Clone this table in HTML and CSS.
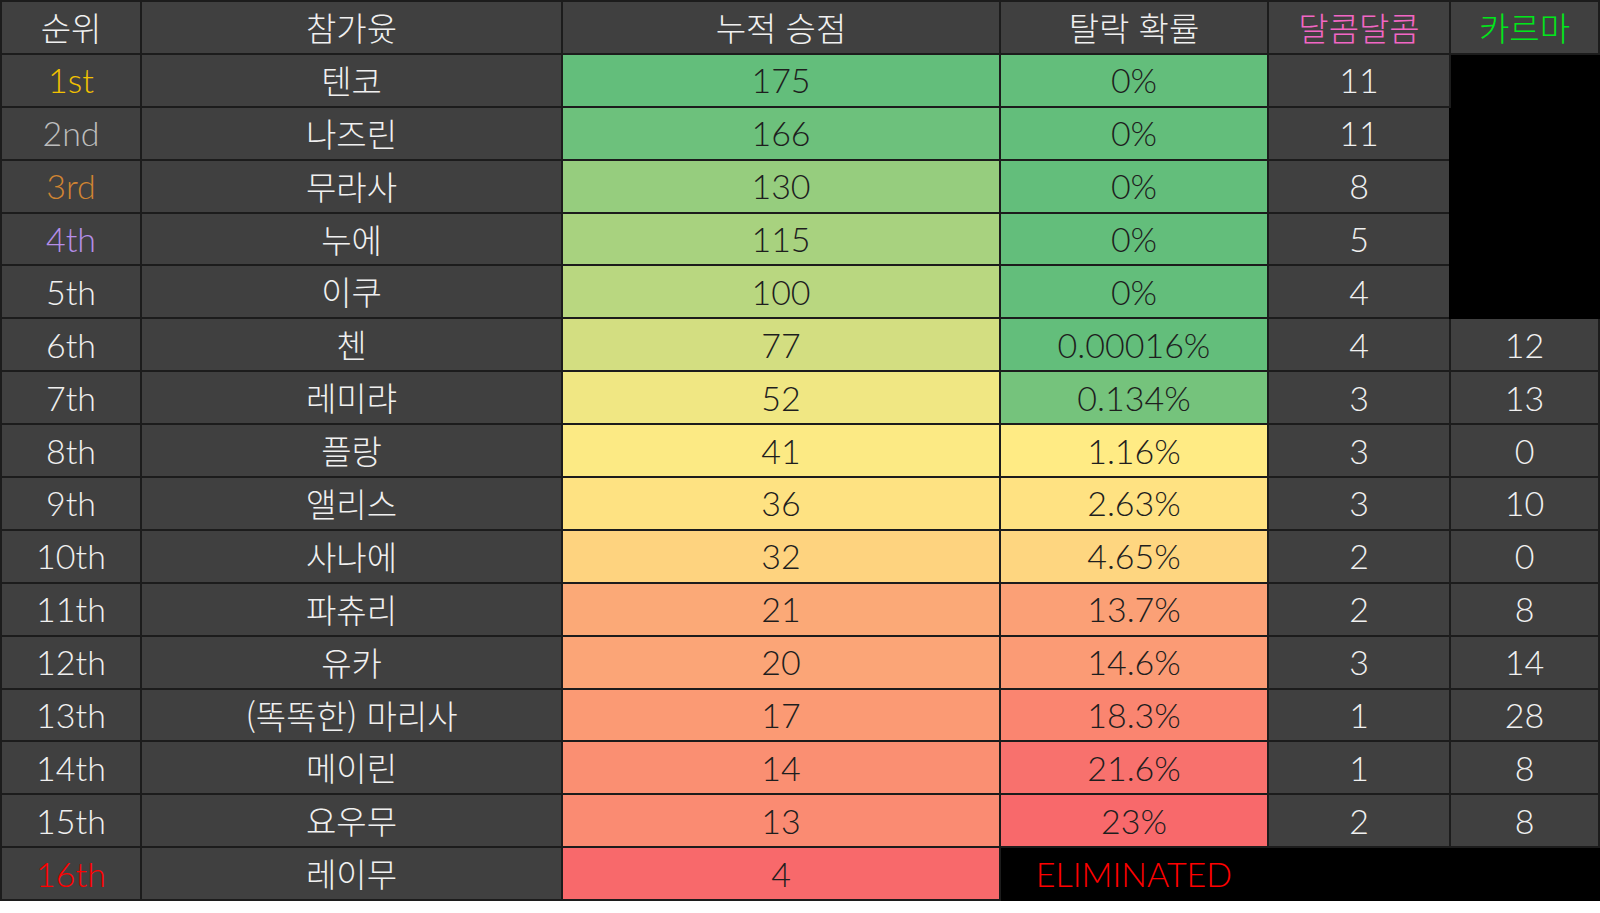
FILE: index.html
```html
<!DOCTYPE html>
<html lang="ko">
<head>
<meta charset="utf-8">
<title>순위표</title>
<link rel="stylesheet" href="styles.css">
</head>
<body>
<table class="board">
  <colgroup>
    <col class="c-rank"><col class="c-name"><col class="c-score"><col class="c-elim"><col class="c-sweet"><col class="c-karma">
  </colgroup>
  <thead>
    <tr>
      <th class="ko">순위</th>
      <th class="ko">참가윳</th>
      <th class="ko">누적 승점</th>
      <th class="ko">탈락 확률</th>
      <th class="ko pink">달콤달콤</th>
      <th class="ko lime">카르마</th>
    </tr>
  </thead>
  <tbody>
    <tr><td class="gold">1st</td><td class="ko">텐코</td><td class="heat" style="background:#63BE7B">175</td><td class="heat" style="background:#63BE7B">0%</td><td>11</td><td class="black" rowspan="5"></td></tr>
    <tr><td class="silver">2nd</td><td class="ko">나즈린</td><td class="heat" style="background:#6DC17C">166</td><td class="heat" style="background:#63BE7B">0%</td><td>11</td></tr>
    <tr><td class="bronze">3rd</td><td class="ko">무라사</td><td class="heat" style="background:#96CD7E">130</td><td class="heat" style="background:#63BE7B">0%</td><td>8</td></tr>
    <tr><td class="violet">4th</td><td class="ko">누에</td><td class="heat" style="background:#A8D27F">115</td><td class="heat" style="background:#63BE7B">0%</td><td>5</td></tr>
    <tr><td>5th</td><td class="ko">이쿠</td><td class="heat" style="background:#B9D780">100</td><td class="heat" style="background:#63BE7B">0%</td><td>4</td></tr>
    <tr><td>6th</td><td class="ko">첸</td><td class="heat" style="background:#D3DE81">77</td><td class="heat" style="background:#63BE7B">0.00016%</td><td>4</td><td>12</td></tr>
    <tr><td>7th</td><td class="ko">레미랴</td><td class="heat" style="background:#F0E783">52</td><td class="heat" style="background:#75C37C">0.134%</td><td>3</td><td>13</td></tr>
    <tr><td>8th</td><td class="ko">플랑</td><td class="heat" style="background:#FCEA84">41</td><td class="heat" style="background:#FFEB84">1.16%</td><td>3</td><td>0</td></tr>
    <tr><td>9th</td><td class="ko">앨리스</td><td class="heat" style="background:#FEE282">36</td><td class="heat" style="background:#FFE282">2.63%</td><td>3</td><td>10</td></tr>
    <tr><td>10th</td><td class="ko">사나에</td><td class="heat" style="background:#FED37F">32</td><td class="heat" style="background:#FED680">4.65%</td><td>2</td><td>0</td></tr>
    <tr><td>11th</td><td class="ko">파츄리</td><td class="heat" style="background:#FBA977">21</td><td class="heat" style="background:#FBA076">13.7%</td><td>2</td><td>8</td></tr>
    <tr><td>12th</td><td class="ko">유카</td><td class="heat" style="background:#FBA577">20</td><td class="heat" style="background:#FB9B75">14.6%</td><td>3</td><td>14</td></tr>
    <tr><td>13th</td><td class="ko">(똑똑한) 마리사</td><td class="heat" style="background:#FB9A74">17</td><td class="heat" style="background:#FA8570">18.3%</td><td>1</td><td>28</td></tr>
    <tr><td>14th</td><td class="ko">메이린</td><td class="heat" style="background:#FA8F72">14</td><td class="heat" style="background:#F8716D">21.6%</td><td>1</td><td>8</td></tr>
    <tr><td>15th</td><td class="ko">요우무</td><td class="heat" style="background:#FA8B72">13</td><td class="heat" style="background:#F8696B">23%</td><td>2</td><td>8</td></tr>
    <tr><td class="red">16th</td><td class="ko">레이무</td><td class="heat" style="background:#F8696B">4</td><td class="black eliminated">ELIMINATED</td><td class="black" colspan="2"></td></tr>
  </tbody>
</table>
</body>
</html>
```

FILE: styles.css
```css
html, body {
  margin: 0;
  padding: 0;
  background: #ffffff;
}

.board {
  border-collapse: collapse;
  table-layout: fixed;
  width: 1598px;
  font-family: "Lato", "Noto Sans CJK KR", sans-serif;
  font-weight: 300;
  font-size: 34px;
  color: #f0f0f0;
  outline: 1px solid #8c8c8c;
}

.c-rank { width: 140px; }
.c-name { width: 421px; }
.c-score { width: 438px; }
.c-elim { width: 268px; }
.c-sweet { width: 182px; }
.c-karma { width: 149px; }

.board th,
.board td {
  height: 50.9px;
  padding: 0;
  border: 2px solid #1c1c1c;
  background: #404040;
  text-align: center;
  vertical-align: middle;
  white-space: nowrap;
  line-height: 1;
}

.board th {
  font-weight: 300;
}

.ko {
  font-family: "Noto Sans CJK KR", "Lato", sans-serif;
  font-size: 33px;
  font-weight: 300;
}

.board td.heat {
  color: #1e1e1e;
}

.board td.black {
  background: #000000;
  border-color: #000000;
}

.board td.eliminated {
  color: #ff0000;
  border-left-color: #1c1c1c;
}

.gold { color: #f2c200; }
.silver { color: #bdbdbd; }
.bronze { color: #d08432; }
.violet { color: #b58ee8; }
.red { color: #ff0000; }
.pink { color: #f266c4; }
.lime { color: #00e81a; }
```
